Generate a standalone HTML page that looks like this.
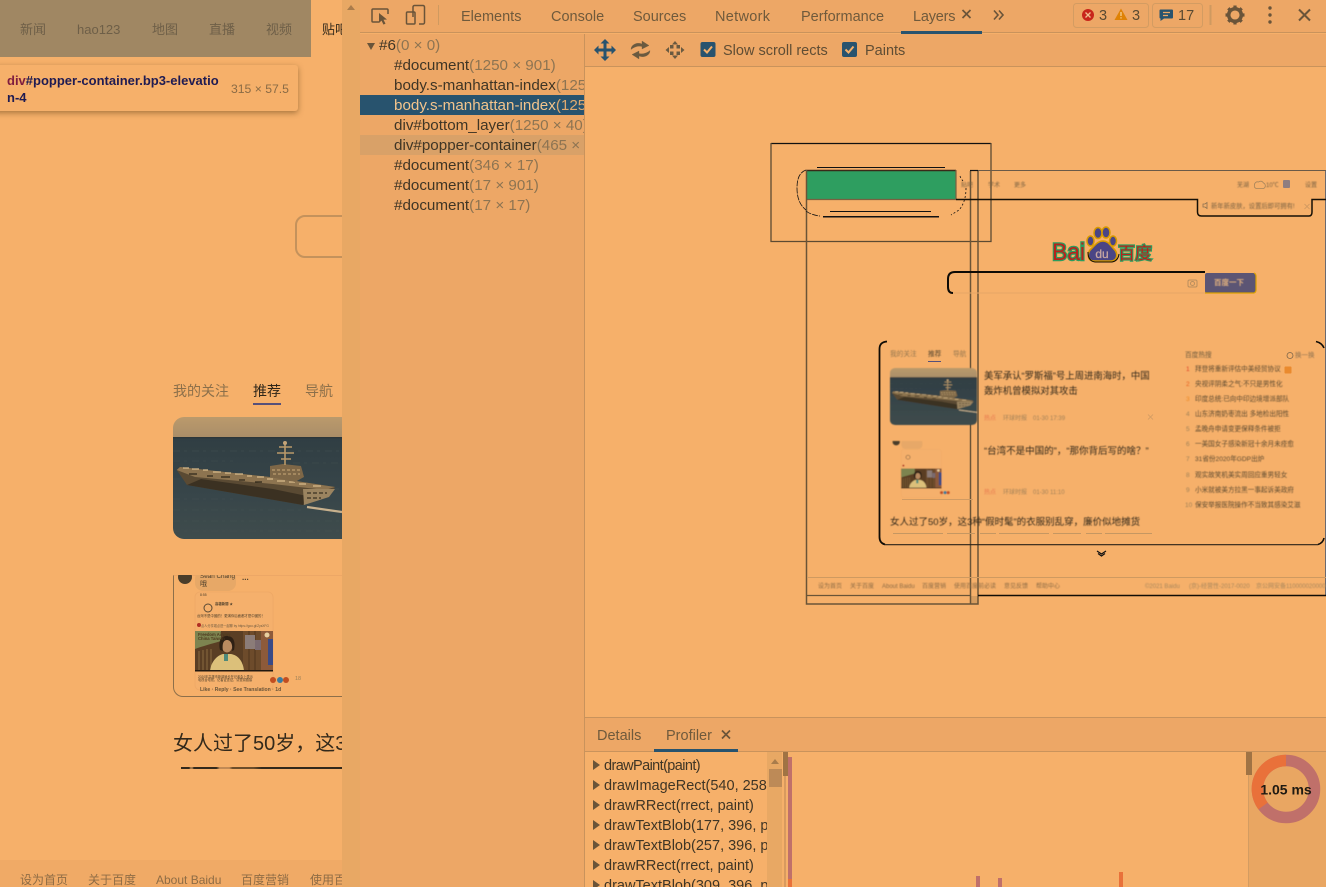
<!DOCTYPE html>
<html><head><meta charset="utf-8"><title>Layers</title>
<style>
*{box-sizing:border-box}
html,body{margin:0;padding:0;width:1326px;height:887px;overflow:hidden;background:#f6b06a;font-family:"Liberation Sans","Noto Sans CJK SC",sans-serif}
.a{position:absolute}
.t{position:absolute;white-space:nowrap;line-height:20px;height:20px}
.dv{font-size:14.5px;color:#6f5a3c}
.tr{font-size:15.2px;color:#3f3525;left:394px}
.tr i{font-style:normal;color:#8d7452}
.pl{font-size:14.5px;color:#3f3525;left:604px}
.tri{position:absolute;left:592px;width:0;height:0;border-left:7px solid #6a5439;border-top:5px solid transparent;border-bottom:5px solid transparent}
.s{position:absolute;white-space:nowrap;line-height:1;color:#7b6242}
#thumb{position:absolute;left:0;top:0;width:1326px;height:887px;filter:blur(.5px)}
#post{position:absolute;left:0;top:0;width:342px;height:887px;filter:blur(.3px)}
</style></head><body>

<!-- left page -->
<div class="a" style="left:0;top:0;width:342px;height:887px;background:#f6b06a;overflow:hidden">
  <div class="a" style="left:0;top:0;width:311px;height:57px;background:#a08763"></div>
  <div class="t" style="left:20px;top:20px;font-size:13px;color:#6e5f48">新闻</div>
  <div class="t" style="left:77px;top:20px;font-size:13px;color:#6e5f48">hao123</div>
  <div class="t" style="left:152px;top:20px;font-size:13px;color:#6e5f48">地图</div>
  <div class="t" style="left:209px;top:20px;font-size:13px;color:#6e5f48">直播</div>
  <div class="t" style="left:266px;top:20px;font-size:13px;color:#6e5f48">视频</div>
  <div class="t" style="left:322px;top:20px;font-size:13px;color:#33291b">贴吧</div>
  <div class="a" style="left:295px;top:215px;width:80px;height:43px;border:2px solid #c4925c;border-radius:10px"></div>

  <div class="a" style="left:9px;top:58px;width:0;height:0;border-left:7px solid transparent;border-right:7px solid transparent;border-bottom:7px solid #f6b06a"></div>
  <div class="a" style="left:-6px;top:65px;width:304px;height:46px;background:#f6b06a;border-radius:3px;box-shadow:0 2px 6px rgba(90,60,20,.5)"></div>
  <div class="a" style="left:7px;top:72px;width:220px;font-size:13px;line-height:17px;font-weight:bold;color:#1f1b52;word-break:break-all;font-family:'Liberation Sans',sans-serif"><span style="color:#7f1d3f">div</span>#popper-container.bp3-elevatio<br>n-4</div>
  <div class="t" style="left:231px;top:79px;font-size:12.2px;color:#8a6b45">315 × 57.5</div>

  <div class="t" style="left:173px;top:381px;font-size:14px;color:#8b6f4a">我的关注</div>
  <div class="t" style="left:253px;top:381px;font-size:14px;color:#2f2619">推荐</div>
  <div class="t" style="left:305px;top:381px;font-size:14px;color:#8b6f4a">导航</div>
  <div class="a" style="left:253px;top:403px;width:28px;height:2px;background:#56507a"></div>

  <svg class="a" style="left:173px;top:417px;border-radius:11px 0 0 11px" width="169" height="122" viewBox="0 0 169 122"><use href="#ship"/></svg>

  <div class="a" style="left:173px;top:575px;width:180px;height:122px;border-left:1.5px solid #8d6f4a;border-bottom:1.5px solid #8d6f4a;border-top:1px solid #eda766;border-radius:0 0 0 10px"></div>
  <svg class="a" style="left:173px;top:575px" width="169" height="122" viewBox="0 0 169 122"><use href="#postimg"/></svg>
  <div id="post">
  <div class="a" style="left:173px;top:575px;width:169px;height:122px;overflow:hidden">
    <div class="s" style="left:27px;top:-1px;font-size:6.3px;color:#4d3f2b">Sean Chang</div>
    <div class="s" style="left:27px;top:6px;font-size:7px;color:#4d3f2b">哦</div>
    <div class="s" style="left:69px;top:-1px;font-size:8px;color:#4d3f2b;font-weight:bold">...</div>
    <div class="s" style="left:27px;top:19px;font-size:3.4px;color:#4d3f2b">8:55</div>
    <div class="s" style="left:42px;top:28px;font-size:3.4px;color:#4d3f2b;font-weight:bold">高雄新聞 ★</div>
    <div class="s" style="left:24px;top:40px;font-size:3.4px;color:#4d3f2b">台灣不是中國的！更滿你后面都才是中國的！</div>
    <div class="s" style="left:28px;top:50px;font-size:3.2px;color:#6d5a40">点人分享观点进一起聊 by https://goo.gl/ZysXFG</div>
    <div class="s" style="left:25px;top:58px;font-size:4.2px;color:#4e3a1e;font-weight:bold">Freedom Airway<br>China Taiwan</div>
    <div class="s" style="left:25px;top:101px;font-size:3.2px;color:#4d3f2b">2020年高雄市新闻局长在记者会上表示<br>电视台电视，记者证查证，请查阅链接</div>
    <div class="s" style="left:122px;top:102px;font-size:5.5px;color:#a08258">18</div>
    <div class="s" style="left:27px;top:113px;font-size:5.1px;color:#6b563a;font-weight:bold">Like · Reply · See Translation · 1d</div>
  </div>
  </div>

  <div class="t" style="left:173px;top:734px;font-size:20px;color:#33291b">女人过了50岁，这3种</div>
  <div class="a" style="left:181px;top:767px;width:161px;height:1.5px;background:linear-gradient(90deg,#33291b 0 5%,#a77a4a 6% 7%,#33291b 8% 22%,#c28a55 24% 30%,#6c4d2a 32% 45%,#33291b 50% 100%)"></div>

  <div class="a" style="left:0;top:860px;width:342px;height:27px;background:#f0aa66"></div>
  <div class="t" style="left:20px;top:870px;font-size:12px;color:#8e6c45">设为首页</div>
  <div class="t" style="left:88px;top:870px;font-size:12px;color:#8e6c45">关于百度</div>
  <div class="t" style="left:156px;top:870px;font-size:12px;color:#8e6c45">About Baidu</div>
  <div class="t" style="left:241px;top:870px;font-size:12px;color:#8e6c45">百度营销</div>
  <div class="t" style="left:310px;top:870px;font-size:12px;color:#8e6c45">使用百度</div>
</div>
<div class="a" style="left:342px;top:0;width:18px;height:887px;background:#e8a864"></div>
<div class="a" style="left:347px;top:5px;width:0;height:0;border-left:4px solid transparent;border-right:4px solid transparent;border-bottom:5px solid #a97c4b"></div>

<!-- devtools top bar -->
<div class="a" style="left:360px;top:0;width:966px;height:33px;background:#eda766;border-bottom:1px solid #c9935c"></div>
<svg class="a" style="left:360px;top:0" width="966" height="34" fill="none">
  <path d="M19 22h-6a1 1 0 0 1-1-1V10a1 1 0 0 1 1-1h14a1 1 0 0 1 1 1v4" stroke="#6a5439" stroke-width="1.5"/>
  <path d="M19 13l0 10 2.5-2.4 2 4 2-1-2-3.8 3.5-.3z" fill="#6a5439"/>
  <path d="M53 17V7a1.5 1.5 0 0 1 1.5-1.5h8.5a1.5 1.5 0 0 1 1.5 1.5v15.5a1.5 1.5 0 0 1-1.5 1.5H59" stroke="#6a5439" stroke-width="1.5"/>
  <rect x="46.5" y="12" width="8.5" height="12" rx="1" stroke="#6a5439" stroke-width="1.5"/>
  <rect x="78" y="5" width="1" height="20" fill="#cf9a60"/>
  <path d="M602.5 10l8 8M610.5 10l-8 8" stroke="#6a5439" stroke-width="1.7"/>
  <path d="M634 10.5l4 4.5-4 4.5M639 10.5l4 4.5-4 4.5" stroke="#6a5439" stroke-width="1.6"/>
  <rect x="713.5" y="3.5" width="75" height="24" rx="3" stroke="#d39c62"/>
  <rect x="792.5" y="3.5" width="50" height="24" rx="3" stroke="#d39c62"/>
  <circle cx="728" cy="15" r="6" fill="#c8251b"/>
  <path d="M725.5 12.5l5 5M730.5 12.5l-5 5" stroke="#f0c090" stroke-width="1.3"/>
  <path d="M761 8.5l6.500 11.500h-13z" fill="#df8205"/>
  <path d="M761 12v4M761 17.200v1.300" stroke="#f6d090" stroke-width="1.3"/>
  <path d="M801 9.500h11a1 1 0 0 1 1 1v7a1 1 0 0 1-1 1h-8l-3.500 2.500v-2.500a1 1 0 0 1-1-1v-7a1 1 0 0 1 1-1z" fill="#28536e"/>
  <path d="M803 12.500h7M803 15.500h5" stroke="#eda766" stroke-width="1.2"/>
  <rect x="849.5" y="5" width="2" height="20" fill="#cf9a60"/>
  <g transform="translate(875 15)"><circle r="6.3" stroke="#6a5439" stroke-width="3.5"/><path d="M0-9.500V-6.500M0 9.500V6.500M-9.500 0H-6.500M9.500 0H6.500M-6.700-6.700l2.100 2.100M6.700 6.700L4.600 4.600M-6.700 6.700l2.100-2.100M6.700-6.700L4.600-4.600" stroke="#6a5439" stroke-width="3.2"/></g>
  <circle cx="910" cy="8" r="1.7" fill="#6a5439"/><circle cx="910" cy="15" r="1.7" fill="#6a5439"/><circle cx="910" cy="22" r="1.7" fill="#6a5439"/>
  <path d="M939 9.500l11 11M950 9.500l-11 11" stroke="#6a5439" stroke-width="2"/>
</svg>
<div class="t dv" style="left:461px;top:7px">Elements</div>
<div class="t dv" style="left:551px;top:7px">Console</div>
<div class="t dv" style="left:633px;top:7px">Sources</div>
<div class="t dv" style="left:715px;top:7px;letter-spacing:.3px">Network</div>
<div class="t dv" style="left:801px;top:7px">Performance</div>
<div class="t dv" style="left:913px;top:7px;letter-spacing:-.2px">Layers</div>
<div class="a" style="left:901px;top:31px;width:81px;height:3px;background:#28536e"></div>
<div class="t" style="left:1099px;top:6px;font-size:14.5px;color:#5a4a32">3</div>
<div class="t" style="left:1132px;top:6px;font-size:14.5px;color:#5a4a32">3</div>
<div class="t" style="left:1178px;top:6px;font-size:14.5px;color:#5a4a32">17</div>

<!-- tree panel -->
<div class="a" style="left:360px;top:34px;width:225px;height:853px;background:#eda766;border-right:1px solid #c9935c"></div>
<div class="a" style="left:360px;top:95px;width:224px;height:20px;background:#28536e"></div>
<div class="a" style="left:360px;top:135px;width:224px;height:20px;background:#d9a168"></div>
<div class="a" style="left:367px;top:43px;width:0;height:0;border-top:7px solid #6a5439;border-left:4.5px solid transparent;border-right:4.5px solid transparent"></div>
<div class="a" style="left:360px;top:35px;width:224px;height:190px;overflow:hidden">
<div class="t tr" style="left:19px;top:1px">#6<i>(0 × 0)</i></div>
<div class="t tr" style="left:34px;top:21px">#document<i>(1250 × 901)</i></div>
<div class="t tr" style="left:34px;top:41px">body.s-manhattan-index<i>(1250 × 901)</i></div>
<div class="t tr" style="left:34px;top:61px;color:#f3c48c">body.s-manhattan-index<i style="color:#e0aa70">(1250 × 901)</i></div>
<div class="t tr" style="left:34px;top:81px">div#bottom_layer<i>(1250 × 40)</i></div>
<div class="t tr" style="left:34px;top:101px">div#popper-container<i>(465 × 217)</i></div>
<div class="t tr" style="left:34px;top:121px">#document<i>(346 × 17)</i></div>
<div class="t tr" style="left:34px;top:141px">#document<i>(17 × 901)</i></div>
<div class="t tr" style="left:34px;top:161px">#document<i>(17 × 17)</i></div>
</div>

<!-- layers toolbar -->
<div class="a" style="left:585px;top:34px;width:741px;height:33px;background:#eda766;border-bottom:1px solid #c9935c"></div>
<svg class="a" style="left:585px;top:34px" width="330" height="33" fill="#28536e">
  <path d="M20 5l4.500 4.500H21.500V14.500H26.500V11.500L31 16l-4.500 4.500V17.500H21.500V22.500H24.500L20 27l-4.500-4.500H18.500V17.500H13.500V20.500L9 16l4.500-4.500V14.500H18.500V9.500H15.500z"/>
  <path d="M46 15.500c0-5 6-7.500 11-5.500V7l7 4.500-7 3.500v-2.500c-4-1-8 .5-11 3zM65 16.500c0 5-6 7.500-11 5.500v3l-7-4.500 7-3.500v2.500c4 1 8-.5 11-3z" fill="#6a5a40" stroke="#6a5a40" stroke-width=".3"/>
  <path d="M90 7l3 3.500h-6zM90 25l3-3.500h-6zM80.500 16l3.500-3v6zM99.500 16l-3.500-3v6z" fill="#6a5a40"/>
  <rect x="85" y="11" width="3.5" height="3.5" fill="#6a5a40"/><rect x="91.5" y="11" width="3.5" height="3.5" fill="#6a5a40"/><rect x="85" y="17.5" width="3.5" height="3.5" fill="#6a5a40"/><rect x="91.5" y="17.5" width="3.5" height="3.5" fill="#6a5a40"/>
  <rect x="115.5" y="8" width="15" height="15" rx="2"/>
  <path d="M119 15.500l3 3 5-6" fill="none" stroke="#f6b06a" stroke-width="2"/>
  <rect x="257" y="8" width="15" height="15" rx="2"/>
  <path d="M260.500 15.500l3 3 5-6" fill="none" stroke="#f6b06a" stroke-width="2"/>
</svg>
<div class="t dv" style="left:723px;top:41px;color:#5f4d34">Slow scroll rects</div>
<div class="t dv" style="left:865px;top:41px;color:#5f4d34">Paints</div>

<!-- shared image symbols + layer wireframe -->
<svg class="a" style="left:0;top:0;pointer-events:none" width="1326" height="887" fill="none">
  <defs>
    <linearGradient id="sky" x1="0" y1="0" x2="0" y2="1"><stop offset="0" stop-color="#bb9a6c"/><stop offset="1" stop-color="#a98d68"/></linearGradient>
    <linearGradient id="sea" x1="0" y1="0" x2="0" y2="1"><stop offset="0" stop-color="#303e43"/><stop offset=".6" stop-color="#38464a"/><stop offset="1" stop-color="#3f4c4c"/></linearGradient>
    <symbol id="ship" viewBox="0 0 169 122" width="169" height="122">
      <rect width="169" height="21" fill="url(#sky)"/>
      <rect y="20" width="169" height="102" fill="url(#sea)"/>
      <rect y="20" width="169" height="1.3" fill="#2c363a"/>
      <path d="M0 34h169M0 44h60M120 46h49M0 62h20M140 72h29M0 82h60M0 93h130M0 104h169M0 114h169" stroke="#4a5755" stroke-width=".7" stroke-dasharray="7 4 3 5" opacity=".5"/>
      <path d="M3.7 53L7 50 97 60 162 70 157 78 130 88 14 68z" fill="#5a4a33"/>
      <path d="M14 68L130 88 134 79 100 72 28 62z" fill="#3b3122"/>
      <path d="M3.7 53L7 50 97 60 162 70 152 73 100 67 22 60z" fill="#8d7450"/>
      <path d="M10 51h6M19 52h7M30 53h5M40 55h8M52 56h6M62 57h8M74 59h5M84 60h7M94 62h6M104 64h8M116 65h6M126 67h7M140 69h8" stroke="#d8ba8a" stroke-width="1.3"/>
      <path d="M16 57h8M34 59h6M48 60h9M66 63h6M82 65h7" stroke="#2f2819" stroke-width="1.2"/>
      <path d="M97 60V49L110 47 128 49 131 60 122 65z" fill="#7e6747"/>
      <path d="M99 53h28M100 57h27" stroke="#c9a877" stroke-width="1.1" stroke-dasharray="3 2"/>
      <path d="M112 48V25M106 30h13M104 36h17M108 42h10" stroke="#b9996a" stroke-width="1.6"/>
      <circle cx="112" cy="26" r="2" fill="#c4a478"/>
      <path d="M130 72H162L156 80 131 88z" fill="#9b8460"/>
      <path d="M134 76h20M134 81h14" stroke="#3b3122" stroke-width="1.2" stroke-dasharray="4 2"/>
      <path d="M134 90L169 95" stroke="#c7b08d" stroke-width="2.2"/>
    </symbol>
    <symbol id="postimg" viewBox="0 0 169 122" width="169" height="122">
      <circle cx="12" cy="2" r="7" fill="#4a3d2a"/>
      <rect x="22" y="-4" width="41" height="20" rx="8" fill="#e7a867"/>
      <rect x="22" y="17" width="78" height="98" rx="5" fill="#f5b06c" stroke="#eea866" stroke-width=".8"/>
      <circle cx="35" cy="33" r="4" fill="none" stroke="#5a4a35"/>
      <circle cx="26" cy="50" r="2" fill="#b02e24"/>
      <rect x="22" y="56" width="78" height="40" fill="#5a3e24"/>
      <path d="M22 56h26v10c-10 3-18 5-26 8z" fill="#7d8450"/>
      <path d="M26 76v20M30 75v21M34 74v22M38 74v22" stroke="#8a6a3f" stroke-width="1"/>
      <rect x="70" y="56" width="18" height="40" fill="#6d4b2b"/>
      <path d="M76 56v40M82 56v40" stroke="#4f361e" stroke-width="1"/>
      <rect x="88" y="56" width="12" height="40" fill="#8d5a3a"/>
      <rect x="95" y="64" width="5" height="26" fill="#3a4a86"/>
      <rect x="72" y="60" width="10" height="14" fill="#8b7c78"/>
      <rect x="82" y="65" width="6" height="10" fill="#7a6a70"/>
      <circle cx="94" cy="60" r="2.5" fill="#e8cfa0"/>
      <path d="M37 96c1-10 8-16 13-17h8c6 1 12 6 13 17z" fill="#dcc07a"/>
      <rect x="51" y="79" width="4" height="7" fill="#4f8a7a"/>
      <ellipse cx="54" cy="70" rx="5.5" ry="7.5" fill="#b98a60"/>
      <path d="M47 75c-2-9 1-14 7-14s9 5 7 14l-2 1c1-6-1-11-5-11s-5 5-4 11z" fill="#2e2014"/>
      <rect x="22" y="95" width="78" height="1.5" fill="#221910"/>
      <circle cx="100" cy="105" r="3" fill="#c24e20"/><circle cx="107" cy="105" r="3" fill="#3c7a9e"/><circle cx="113" cy="105" r="3" fill="#c24e20"/>
    </symbol>
  </defs>

  <!-- wireframe -->
  <path d="M771 143.500H991" stroke="#111" stroke-width="1.3"/>
  <path d="M771 143v98.500H991V143" stroke="#5c4a32" stroke-width="1.3"/>
  <rect x="807" y="171" width="149" height="28" fill="#2e9e60"/>
  <path d="M806 170.500H956" stroke="#3a2a18" stroke-width="1.5"/>
  <path d="M806 199.500H956M956 170v29" stroke="#7a6040" stroke-width="1.2"/>
  <path d="M806.500 170V604H970" stroke="#6a5437" stroke-width="1.5"/>
  <path d="M806 595.500H970" stroke="#6a5437" stroke-width="1.3"/>
  <rect x="970" y="596" width="8" height="8" fill="#d79d5f"/>
  <path d="M970.500 171V604M978 171V604H970" stroke="#6a5437" stroke-width="1.5"/>
  <path d="M970 170.500H978" stroke="#111" stroke-width="1.2"/>
  <path d="M978 170.500H1326" stroke="#6a5a48" stroke-width="1.1"/>
  <path d="M1325.500 171V595" stroke="#6b6a70" stroke-width="1"/>
  <path d="M956 199.500H1197.500V212Q1197.500 216 1201.500 216H1309Q1312 216 1312 212V199.500H1326" stroke="#161006" stroke-width="1.5"/>
  <path d="M817 167.500H945" stroke="#111" stroke-width="1"/>
  <path d="M823 216.700H939" stroke="#111" stroke-width="1.5"/>
  <path d="M830 211.500H931" stroke="#111" stroke-width="1"/>
  <path d="M806 170Q797 173 797 188Q797 203 806 210M806 211q5 4 14 5" stroke="#111" stroke-width=".8" stroke-dasharray="6 1"/>
  <path d="M960 176q1 3 3 5M966 188q0 14-7 22l-8 5" stroke="#111" stroke-width=".8" stroke-dasharray="2 2"/>

  <!-- search -->
  <path d="M1205 272H955Q948 272 948 279V287Q948 293 953 293" stroke="#0e0b06" stroke-width="2"/>
  <path d="M953 293H1205" stroke="#e6a666" stroke-width="1"/>
  <rect x="1205" y="273" width="51" height="20" rx="2" fill="#5c5574"/>
  <path d="M1205 293H1254Q1256 292 1256 290V276Q1256 274 1254 273" stroke="#d9a000" stroke-width="1.2"/>
  <rect x="1188" y="280" width="9" height="7" rx="1.5" stroke="#b98e5e"/><circle cx="1192.500" cy="283.500" r="2" stroke="#b98e5e"/>

  <!-- card -->
  <path d="M887 341.500Q879.500 342 879.500 349V537Q879.500 543 885 544.500" stroke="#100c06" stroke-width="1.8"/>
  <path d="M885 544.700H1318" stroke="#2b2318" stroke-width="1.2"/>
  <path d="M1316 341.500Q1322 343 1324 348M1324 538Q1323 543 1318 544.500" stroke="#100c06" stroke-width="1.6"/>
  <path d="M1097 551l4.500 3 4.500-3M1098 553.500l3.500 2.500 3.500-2.500" stroke="#111" stroke-width="1.2"/>

  <!-- footer lines -->
  <path d="M807 577.500H1326" stroke="#cf9a60" stroke-width="1"/>
  <path d="M978 595.500H1326" stroke="#120d06" stroke-width="1.5"/>

  <!-- thumb images -->
  <filter id="b"><feGaussianBlur stdDeviation=".45"/></filter>
  <g filter="url(#b)">
    <svg x="890" y="368" width="87" height="57" viewBox="0 0 169 122" preserveAspectRatio="none"><clipPath id="c1"><rect width="169" height="122" rx="10"/></clipPath><g clip-path="url(#c1)"><use href="#ship"/></g></svg>
    <svg x="890" y="441" width="87" height="60" viewBox="0 0 169 122" preserveAspectRatio="none"><use href="#postimg"/></svg>
  </g>
  <path d="M902 499.500H973" stroke="#d09b63" stroke-width="1"/>
  <rect x="928" y="361" width="13" height="1" fill="#56507a"/>
  <path d="M1148 414.500l5 5M1153 414.500l-5 5" stroke="#d09b63" stroke-width=".8"/>
  <path d="M893 533.500H1152" stroke="#c59762" stroke-width="1" stroke-dasharray="50 4 28 5 16 3"/>
  <circle cx="1290" cy="355.500" r="3" stroke="#7d654a" stroke-width=".8"/>
  <rect x="1284.500" y="366.500" width="7" height="7" rx="1" fill="#ea8a2e"/>
  <path d="M1254.500 185a3 3 0 0 1 4-3q3-2 5 1a3 3 0 0 1 0 5.500h-7a2.500 2.500 0 0 1-2-3.500z" stroke="#a5845c" stroke-width=".8"/>
  <rect x="1283" y="180" width="7" height="8" rx="1" fill="#8f7e80"/>
  <path d="M1203 204h2l2-1.500v6l-2-1.500h-2z" stroke="#8c7150" stroke-width=".8"/>
  <path d="M1304.500 204l5 5M1309.500 204l-5 5" stroke="#cc9760" stroke-width=".8"/>

  <!-- logo -->
  <text x="1052" y="260" font-family="Liberation Sans,sans-serif" font-size="24" fill="#b8211c" stroke="#2d9c5e" stroke-width="2.4" paint-order="stroke" textLength="33" lengthAdjust="spacingAndGlyphs">Bai</text>
  <text x="1118" y="259" font-family="Liberation Sans,Noto Sans CJK SC,sans-serif" font-size="17" fill="#b8211c" stroke="#2d9c5e" stroke-width="2.2" paint-order="stroke" textLength="34" lengthAdjust="spacingAndGlyphs">百度</text>
  <g stroke="#0f0b06" stroke-width="1" fill="#4a4585">
    <ellipse cx="1098" cy="233" rx="4" ry="5.5" stroke="#d79a00" stroke-width="1.5"/>
    <ellipse cx="1106" cy="232.500" rx="4" ry="5.5" stroke="#d79a00" stroke-width="1.5"/>
    <ellipse cx="1090.500" cy="241" rx="3.5" ry="5" stroke="#d79a00" stroke-width="1.5"/>
    <ellipse cx="1113" cy="241" rx="3.5" ry="5" stroke="#d79a00" stroke-width="1.5"/>
    <path d="M1103 241c5 0 7 4 11 8 4 4 4 12-3 12h-17c-7 0-7-8-3-12 4-4 7-8 12-8z" stroke="#d79a00" stroke-width="1.6"/>
    <path d="M1088 252q0 9 7 10h17q6-1 7-8" stroke="#0f0b06" stroke-width="1" fill="none"/>
  </g>
  <text x="1102" y="258" text-anchor="middle" font-family="Liberation Sans,sans-serif" font-size="12" fill="#c6a6a2" stroke="#c6a6a2" stroke-width=".3">du</text>
</svg>

<!-- thumbnail texts -->
<div id="thumb">
  <div class="s" style="left:961px;top:183px;font-size:6px">贴吧</div>
  <div class="s" style="left:988px;top:183px;font-size:6px">学术</div>
  <div class="s" style="left:1014px;top:183px;font-size:6px">更多</div>
  <div class="s" style="left:1237px;top:183px;font-size:6px">芜湖</div>
  <div class="s" style="left:1266px;top:183px;font-size:6px">10℃</div>
  <div class="s" style="left:1305px;top:183px;font-size:6px">设置</div>
  <div class="s" style="left:1211px;top:204px;font-size:6.3px">新年新皮肤，设置后即可拥有!</div>
  <div class="s" style="left:1214px;top:279px;font-size:7.5px;color:#e0b07e;font-weight:bold">百度一下</div>

  <div class="s" style="left:890px;top:352px;font-size:6.7px;color:#95774f">我的关注</div>
  <div class="s" style="left:928px;top:352px;font-size:6.7px;color:#55462f">推荐</div>
  <div class="s" style="left:953px;top:352px;font-size:6.7px;color:#95774f">导航</div>

  <div class="s" style="left:984px;top:369px;font-size:9.4px;line-height:14.5px;color:#33291b">美军承认“罗斯福”号上周进南海时，中国<br>轰炸机曾模拟对其攻击</div>
  <div class="s" style="left:984px;top:447px;font-size:9.5px;color:#33291b">“台湾不是中国的”，“那你背后写的啥？”</div>
  <div class="s" style="left:890px;top:518px;font-size:9.5px;color:#33291b">女人过了50岁，这3种“假时髦”的衣服别乱穿，廉价似地摊货</div>
  <div class="s" style="left:984px;top:416px;font-size:6px;color:#e87a50">热点</div>
  <div class="s" style="left:1003px;top:416px;font-size:6px;color:#a28158">环球时报</div>
  <div class="s" style="left:1033px;top:416px;font-size:6px;color:#a28158">01-30 17:39</div>
  <div class="s" style="left:984px;top:490px;font-size:6px;color:#e87a50">热点</div>
  <div class="s" style="left:1003px;top:490px;font-size:6px;color:#a28158">环球时报</div>
  <div class="s" style="left:1033px;top:490px;font-size:6px;color:#a28158">01-30 11:10</div>

  <div class="s" style="left:1185px;top:353px;font-size:6.7px;color:#6d5a3d">百度热搜</div>
  <div class="s" style="left:1295px;top:353px;font-size:6.5px;color:#8d7150">换一换</div>

  <div class="s" style="left:1186px;top:367px;font-size:6.5px;color:#e0442a">1</div><div class="s" style="left:1195px;top:367px;font-size:6.6px;color:#5d4a30">拜登将重新评估中美经贸协议</div>
  <div class="s" style="left:1186px;top:382px;font-size:6.5px;color:#e8601f">2</div><div class="s" style="left:1195px;top:382px;font-size:6.6px;color:#5d4a30">央视评阴柔之气:不只是男性化</div>
  <div class="s" style="left:1186px;top:397px;font-size:6.5px;color:#ee8a25">3</div><div class="s" style="left:1195px;top:397px;font-size:6.6px;color:#5d4a30">印度总统:已向中印边境增派部队</div>
  <div class="s" style="left:1186px;top:412px;font-size:6.5px;color:#a08258">4</div><div class="s" style="left:1195px;top:412px;font-size:6.6px;color:#5d4a30">山东济南奶枣流出 多地检出阳性</div>
  <div class="s" style="left:1186px;top:427px;font-size:6.5px;color:#a08258">5</div><div class="s" style="left:1195px;top:427px;font-size:6.6px;color:#5d4a30">孟晚舟申请变更保释条件被拒</div>
  <div class="s" style="left:1186px;top:442px;font-size:6.5px;color:#a08258">6</div><div class="s" style="left:1195px;top:442px;font-size:6.6px;color:#5d4a30">一美国女子感染新冠十余月未痊愈</div>
  <div class="s" style="left:1186px;top:457px;font-size:6.5px;color:#a08258">7</div><div class="s" style="left:1195px;top:457px;font-size:6.6px;color:#5d4a30">31省份2020年GDP出炉</div>
  <div class="s" style="left:1186px;top:473px;font-size:6.5px;color:#a08258">8</div><div class="s" style="left:1195px;top:473px;font-size:6.6px;color:#5d4a30">观实故笑机美实周回应重男轻女</div>
  <div class="s" style="left:1186px;top:488px;font-size:6.5px;color:#a08258">9</div><div class="s" style="left:1195px;top:488px;font-size:6.6px;color:#5d4a30">小米就被美方拉黑一事起诉美政府</div>
  <div class="s" style="left:1185px;top:503px;font-size:6.5px;color:#a08258">10</div><div class="s" style="left:1195px;top:503px;font-size:6.6px;color:#5d4a30">保安举报医院操作不当致其感染艾滋</div>

  <div class="s" style="left:818px;top:584px;font-size:6px;color:#8e6c45">设为首页</div>
  <div class="s" style="left:850px;top:584px;font-size:6px;color:#8e6c45">关于百度</div>
  <div class="s" style="left:882px;top:584px;font-size:6px;color:#8e6c45">About Baidu</div>
  <div class="s" style="left:922px;top:584px;font-size:6px;color:#8e6c45">百度营销</div>
  <div class="s" style="left:954px;top:584px;font-size:6px;color:#8e6c45">使用百度前必读</div>
  <div class="s" style="left:1004px;top:584px;font-size:6px;color:#8e6c45">意见反馈</div>
  <div class="s" style="left:1036px;top:584px;font-size:6px;color:#8e6c45">帮助中心</div>
  <div class="s" style="left:1145px;top:584px;font-size:6px;color:#a8875c">©2021 Baidu</div>
  <div class="s" style="left:1189px;top:584px;font-size:6px;color:#a8875c">(京)-经营性-2017-0020</div>
  <div class="s" style="left:1256px;top:584px;font-size:6px;color:#a8875c">京公网安备11000002000001</div>
</div>

<!-- bottom panel -->
<div class="a" style="left:585px;top:717px;width:741px;height:35px;background:#eda766;border-top:1px solid #c9935c;border-bottom:1px solid #c9935c"></div>
<div class="t dv" style="left:597px;top:726px">Details</div>
<div class="t dv" style="left:666px;top:726px">Profiler</div>
<svg class="a" style="left:720px;top:729px" width="12" height="12" fill="none"><path d="M2 1.500l8 8M10 1.500l-8 8" stroke="#6a5439" stroke-width="1.7"/></svg>
<div class="a" style="left:654px;top:749px;width:84px;height:2.5px;background:#28536e"></div>

<div class="a" style="left:585px;top:752px;width:183px;height:135px;overflow:hidden;background:#f6b06a">
  <div class="t pl" style="left:19px;top:4px;letter-spacing:-.6px">drawPaint(paint)</div>
  <div class="t pl" style="left:19px;top:24px">drawImageRect(540, 258, 540, 258)</div>
  <div class="t pl" style="left:19px;top:44px">drawRRect(rrect, paint)</div>
  <div class="t pl" style="left:19px;top:64px">drawTextBlob(177, 396, paint)</div>
  <div class="t pl" style="left:19px;top:84px">drawTextBlob(257, 396, paint)</div>
  <div class="t pl" style="left:19px;top:104px">drawRRect(rrect, paint)</div>
  <div class="t pl" style="left:19px;top:124px">drawTextBlob(309, 396, paint)</div>
  <div class="tri" style="left:8px;top:8px"></div>
  <div class="tri" style="left:8px;top:28px"></div>
  <div class="tri" style="left:8px;top:48px"></div>
  <div class="tri" style="left:8px;top:68px"></div>
  <div class="tri" style="left:8px;top:88px"></div>
  <div class="tri" style="left:8px;top:108px"></div>
  <div class="tri" style="left:8px;top:128px"></div>
</div>
<div class="a" style="left:767px;top:752px;width:15px;height:135px;background:#e8a864"></div>
<div class="a" style="left:769px;top:769px;width:13px;height:18px;background:#bd8a57"></div>
<div class="a" style="left:771px;top:759px;width:0;height:0;border-left:4px solid transparent;border-right:4px solid transparent;border-bottom:5px solid #a97c4b"></div>

<svg class="a" style="left:782px;top:752px" width="544" height="135" fill="none">
  <rect x="466" y="0" width="78" height="135" fill="#e9a662"/>
  <path d="M466.500 0V135" stroke="#d39c62"/>
  <rect x="1" y="0" width="5" height="24" fill="#a07344"/>
  <rect x="464" y="0" width="6" height="23" fill="#a07344"/>
  <rect x="2" y="24" width="2" height="111" fill="#d89a5f"/>
  <rect x="6" y="5" width="4" height="122" fill="#c0706a"/>
  <rect x="6" y="127" width="4" height="8" fill="#e9713a"/>
  <rect x="194" y="124" width="4" height="11" fill="#c0706a"/>
  <rect x="216" y="126" width="4" height="9" fill="#c0706a"/>
  <rect x="337" y="120" width="4" height="15" fill="#e9713a"/>
  <circle cx="504" cy="37" r="28.5" stroke="#c0706a" stroke-width="11.5"/>
  <path d="M504 8.500A28.500 28.500 0 0 0 481 54" stroke="#e9713a" stroke-width="11.5"/>
  <text x="504" y="42.5" text-anchor="middle" font-family="Liberation Sans,sans-serif" font-size="14" font-weight="bold" fill="#1f1a12">1.05 ms</text>
</svg>
</body></html>
